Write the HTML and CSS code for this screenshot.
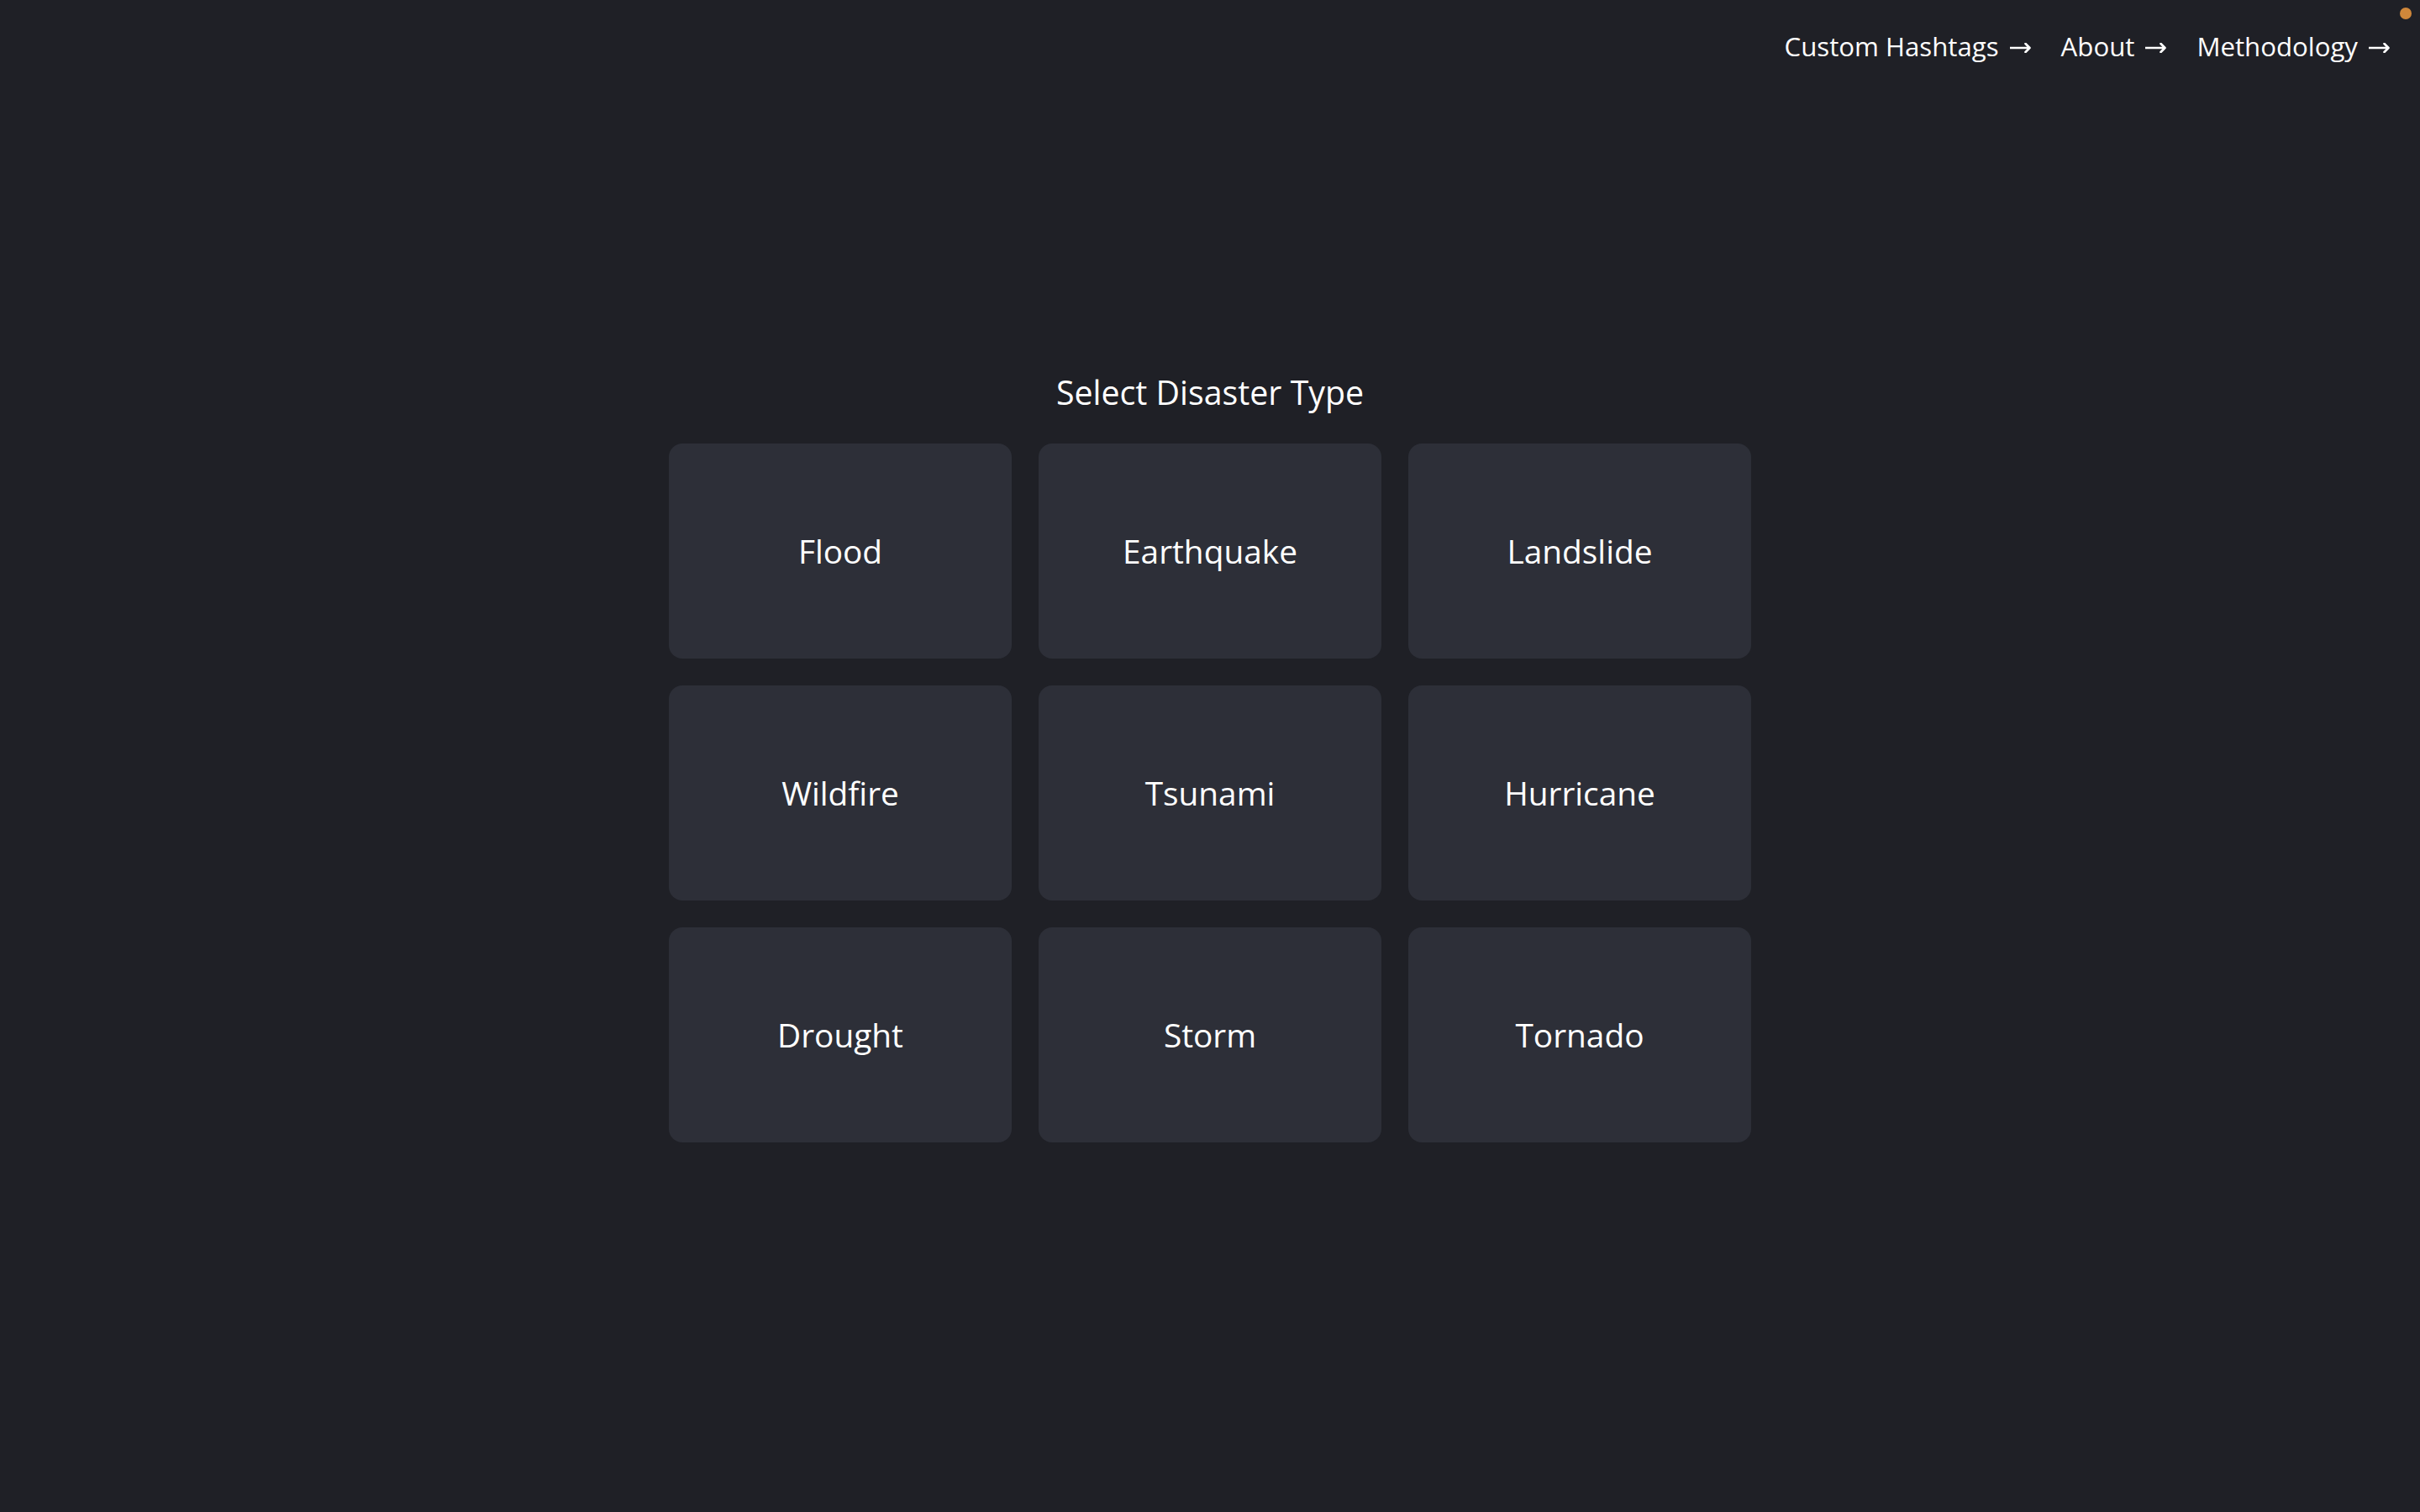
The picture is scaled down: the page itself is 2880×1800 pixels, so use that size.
FILE: index.html
```html
<!DOCTYPE html>
<html lang="en">
<head>
<meta charset="utf-8">
<title>Select Disaster Type</title>
<link rel="stylesheet" href="styles.css">
</head>
<body>
<span class="status-dot"></span>
<header class="topnav">
  <a class="topnav-link" href="#">Custom Hashtags<svg class="topnav-arrow" viewBox="0 0 25 12" aria-hidden="true"><path d="M0 6H23.5M18.5 1L23.5 6L18.5 11"/></svg></a>
  <a class="topnav-link" href="#">About<svg class="topnav-arrow" viewBox="0 0 25 12" aria-hidden="true"><path d="M0 6H23.5M18.5 1L23.5 6L18.5 11"/></svg></a>
  <a class="topnav-link" href="#">Methodology<svg class="topnav-arrow" viewBox="0 0 25 12" aria-hidden="true"><path d="M0 6H23.5M18.5 1L23.5 6L18.5 11"/></svg></a>
</header>
<main class="picker">
  <h1 class="picker-title">Select Disaster Type</h1>
  <div class="picker-grid">
    <button class="picker-card">Flood</button>
    <button class="picker-card">Earthquake</button>
    <button class="picker-card">Landslide</button>
    <button class="picker-card">Wildfire</button>
    <button class="picker-card">Tsunami</button>
    <button class="picker-card">Hurricane</button>
    <button class="picker-card">Drought</button>
    <button class="picker-card">Storm</button>
    <button class="picker-card">Tornado</button>
  </div>
</main>
</body>
</html>
```

FILE: styles.css
```css
html, body {
  margin: 0;
  padding: 0;
}
body {
  background: #1f2026;
  color: #ffffff;
  font-family: "Open Sans", "Noto Sans", sans-serif;
  min-height: 100vh;
}
.status-dot {
  position: absolute;
  top: 9px;
  right: 10px;
  width: 14px;
  height: 14px;
  border-radius: 50%;
  background: #d0873a;
}
.topnav {
  display: flex;
  justify-content: flex-end;
  gap: 36px;
  padding: 35px 36px 0 0;
}
.topnav-link {
  display: flex;
  align-items: baseline;
  gap: 13px;
  color: #ffffff;
  text-decoration: none;
  font-size: 31.2px;
  font-weight: 530;
  line-height: 40px;
}
.topnav-arrow {
  width: 25px;
  height: 12px;
  fill: none;
  stroke: #ffffff;
  stroke-width: 2.6;
  stroke-linecap: round;
  stroke-linejoin: round;
  position: relative;
  top: -4px;
}
.picker {
  display: flex;
  flex-direction: column;
  align-items: center;
  padding-top: 367px;
}
.picker-title {
  margin: 0 0 36px;
  font-size: 39.3px;
  line-height: 50px;
  font-weight: 530;
}
.picker-grid {
  display: grid;
  grid-template-columns: repeat(3, 408px);
  grid-auto-rows: 256px;
  gap: 32px;
}
.picker-card {
  border: none;
  border-radius: 16px;
  background: #2d2f38;
  color: #ffffff;
  font-family: inherit;
  font-size: 38.8px;
  font-weight: 530;
  cursor: pointer;
}
```
